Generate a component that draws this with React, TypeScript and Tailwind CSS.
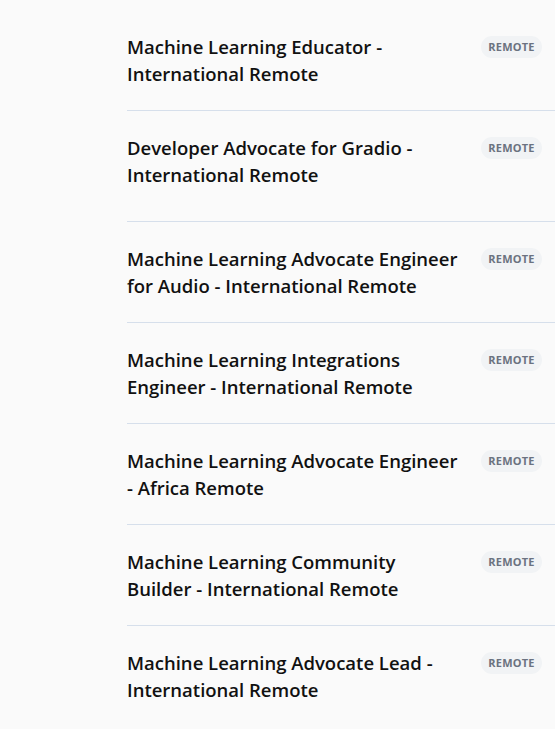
import React from "react";

const jobs: { title: string; pt: string; pb: string }[] = [
  { title: "Machine Learning Educator - International Remote", pt: "pt-[33px]", pb: "pb-[23px]" },
  { title: "Developer Advocate for Gradio - International Remote", pt: "pt-[23px]", pb: "pb-[33px]" },
  { title: "Machine Learning Advocate Engineer for Audio - International Remote", pt: "pt-[23px]", pb: "pb-[23px]" },
  { title: "Machine Learning Integrations Engineer - International Remote", pt: "pt-[23px]", pb: "pb-[23px]" },
  { title: "Machine Learning Advocate Engineer - Africa Remote", pt: "pt-[23px]", pb: "pb-[23px]" },
  { title: "Machine Learning Community Builder - International Remote", pt: "pt-[23px]", pb: "pb-[23px]" },
  { title: "Machine Learning Advocate Lead - International Remote", pt: "pt-[23px]", pb: "pb-[23px]" },
];

export default function App() {
  return (
    <div
      className="min-h-[729px] w-[555px] bg-[#fafafa] pl-[127px] overflow-hidden"
      style={{ fontFamily: '"Open Sans", "Noto Sans", sans-serif' }}
    >
      {jobs.map((j, i) => (
        <div
          key={i}
          className={`flex items-start pr-[13px] ${j.pt} ${j.pb} ${
            i < jobs.length - 1 ? "border-b border-[#d6dfeb]" : ""
          }`}
        >
          <div className="flex-1 text-[18.5px] leading-[27px] font-semibold text-[#111111] pr-[20px]">
            {j.title}
          </div>
          <div className="mt-[3px] h-[22px] min-h-[22px] w-[61px] shrink-0 rounded-full bg-[#f1f3f5] flex items-center justify-center text-[11px] leading-[22px] font-bold text-[#6b7280] tracking-[0.2px]">
            REMOTE
          </div>
        </div>
      ))}
    </div>
  );
}
